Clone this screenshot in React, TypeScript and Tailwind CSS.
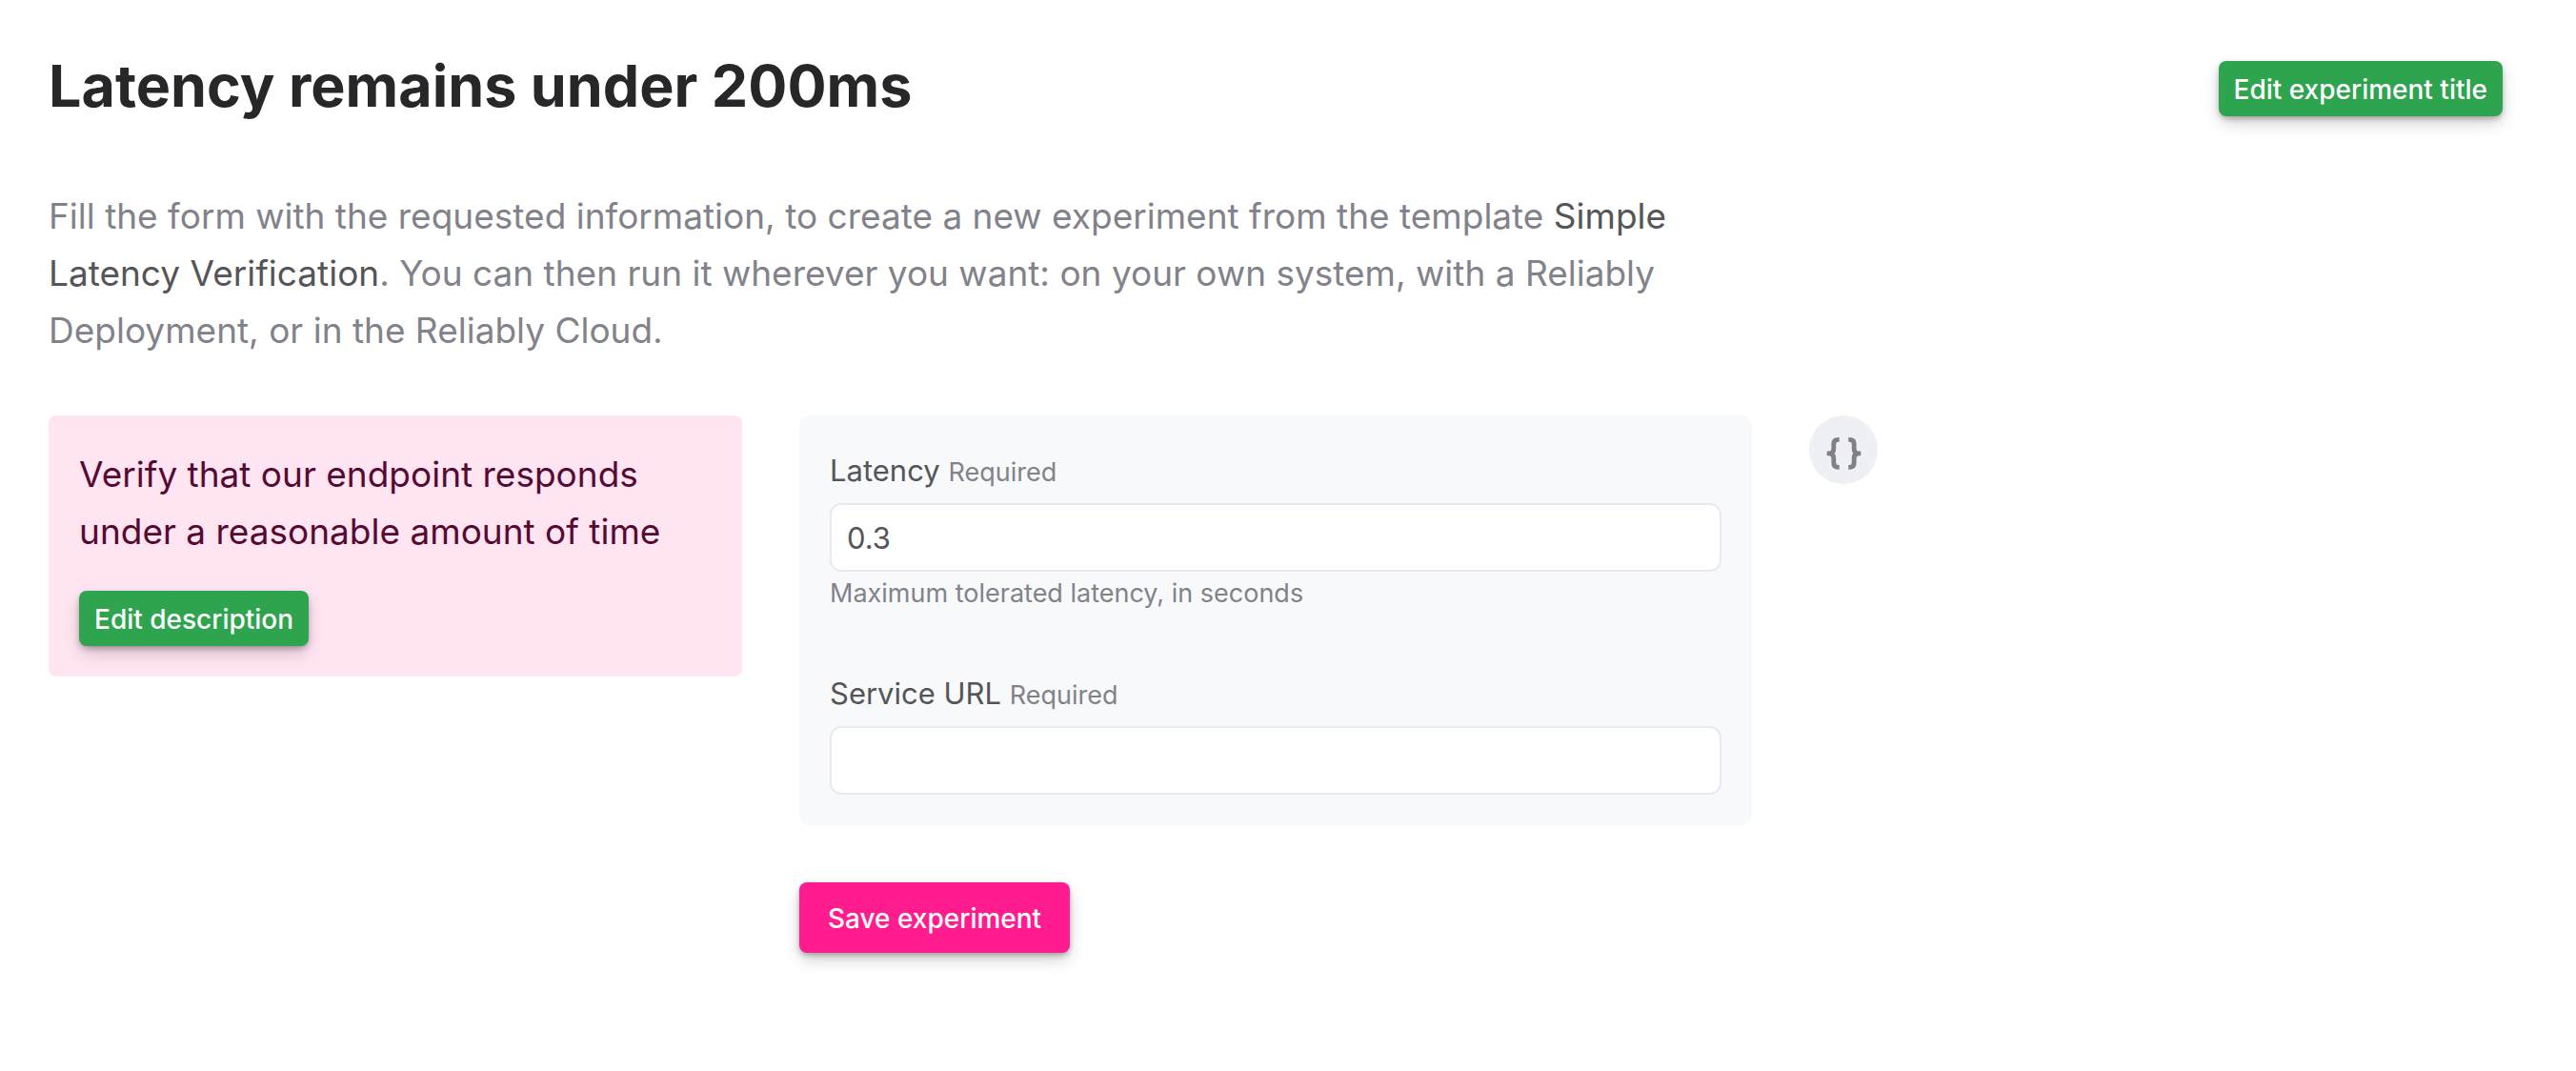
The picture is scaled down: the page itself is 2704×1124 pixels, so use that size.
import { useState } from "react";
import type { ButtonHTMLAttributes } from "react";

const TONES = {
  green: "h-[58px] bg-[#2ea44f] px-4 pt-0.5",
  pink: "h-[74px] bg-[#ff1c8e] px-[30px] pt-0.5",
};

function Button({ tone, ...props }: ButtonHTMLAttributes<HTMLButtonElement> & { tone: keyof typeof TONES }) {
  return (
    <button
      {...props}
      className={`${TONES[tone]} flex shrink-0 items-center justify-center rounded-lg text-[28px] font-medium whitespace-nowrap text-white shadow-[0_8px_18px_-2px_rgba(0,0,0,0.2),0_3px_6px_-1px_rgba(0,0,0,0.3)]`}
    />
  );
}

function Field({ id, label, hint, initial }: { id: string; label: string; hint?: string; initial: string }) {
  const [value, setValue] = useState(initial);
  return (
    <div className="flex flex-col">
      <label htmlFor={id} className="mb-2.5 text-[31px] leading-[48px] text-[#555558]">
        {label} <span className="text-[27px] leading-none text-[#82828a]">Required</span>
      </label>
      <input
        id={id}
        type="text"
        required
        value={value}
        onChange={(e) => setValue(e.target.value)}
        className="h-[72px] w-full rounded-xl border-2 border-[#e8e9f2] bg-white px-4 text-[31px] text-[#555558] outline-none focus:border-[#ff1c8e]"
      />
      {hint && <p className="mt-0.5 text-[27px] leading-[42px] text-[#82828a]">{hint}</p>}
    </div>
  );
}

export default function App() {
  return (
    <main className="bg-white pt-14 pr-[77px] pb-32 pl-[51px] font-[Inter,sans-serif]">
      <header className="flex items-start justify-between gap-8">
        <h1 className="text-[61px] leading-[68px] font-bold text-[#27272a]">Latency remains under 200ms</h1>
        <div className="pt-2">
          <Button type="button" tone="green">Edit experiment title</Button>
        </div>
      </header>

      <p className="mt-[73px] max-w-[1760px] text-[37px] leading-[60px] text-[#82828a]">
        Fill the form with the requested information, to create a new experiment from the template{" "}
        <strong className="font-normal text-[#555558]">Simple Latency Verification</strong>. You can then run it
        wherever you want: on your own system, with a Reliably Deployment, or in the Reliably Cloud.
      </p>

      <div className="mt-[59px] flex items-start gap-[60px]">
        <section className="flex max-w-[728px] flex-1 flex-col items-start gap-8 rounded-lg bg-[#ffe4f1] p-8 text-[#560a31]">
          <p className="text-[37px] leading-[60px]">Verify that our endpoint responds under a reasonable amount of time</p>
          <Button type="button" tone="green">Edit description</Button>
        </section>

        <form className="flex max-w-[1000px] flex-1 flex-col items-start gap-[60px]" onSubmit={(e) => e.preventDefault()}>
          <div className="flex w-full flex-col gap-[60px] rounded-xl bg-[#f8f9fb] px-8 pt-[34px] pb-8">
            <Field id="latency" label="Latency" hint="Maximum tolerated latency, in seconds" initial="0.3" />
            <Field id="service-url" label="Service URL" initial="" />
          </div>
          <Button type="submit" tone="pink">Save experiment</Button>
        </form>

        <button
          type="button"
          aria-label="Show experiment code"
          className="flex size-[72px] shrink-0 items-center justify-center rounded-full bg-[#eff0f6] text-[#808085]"
        >
          <svg viewBox="0 0 72 72" className="size-full" fill="none" stroke="currentColor" strokeWidth="4.8" aria-hidden="true">
            <path d="M31.700 25.400H30.500c-3 0-4.700 1.600-4.700 4.600v5c0 3-1.600 4.900-4.800 4.900H18.700H21c3.200 0 4.800 1.900 4.800 4.900v5c0 3 1.700 4.600 4.700 4.600h1.200" />
            <path d="M41.300 25.400h1.200c3 0 4.700 1.600 4.700 4.600v5c0 3 1.600 4.900 4.800 4.900h2.300H52c-3.200 0-4.800 1.900-4.800 4.900v5c0 3-1.700 4.600-4.700 4.600h-1.200" />
          </svg>
        </button>
      </div>
    </main>
  );
}
